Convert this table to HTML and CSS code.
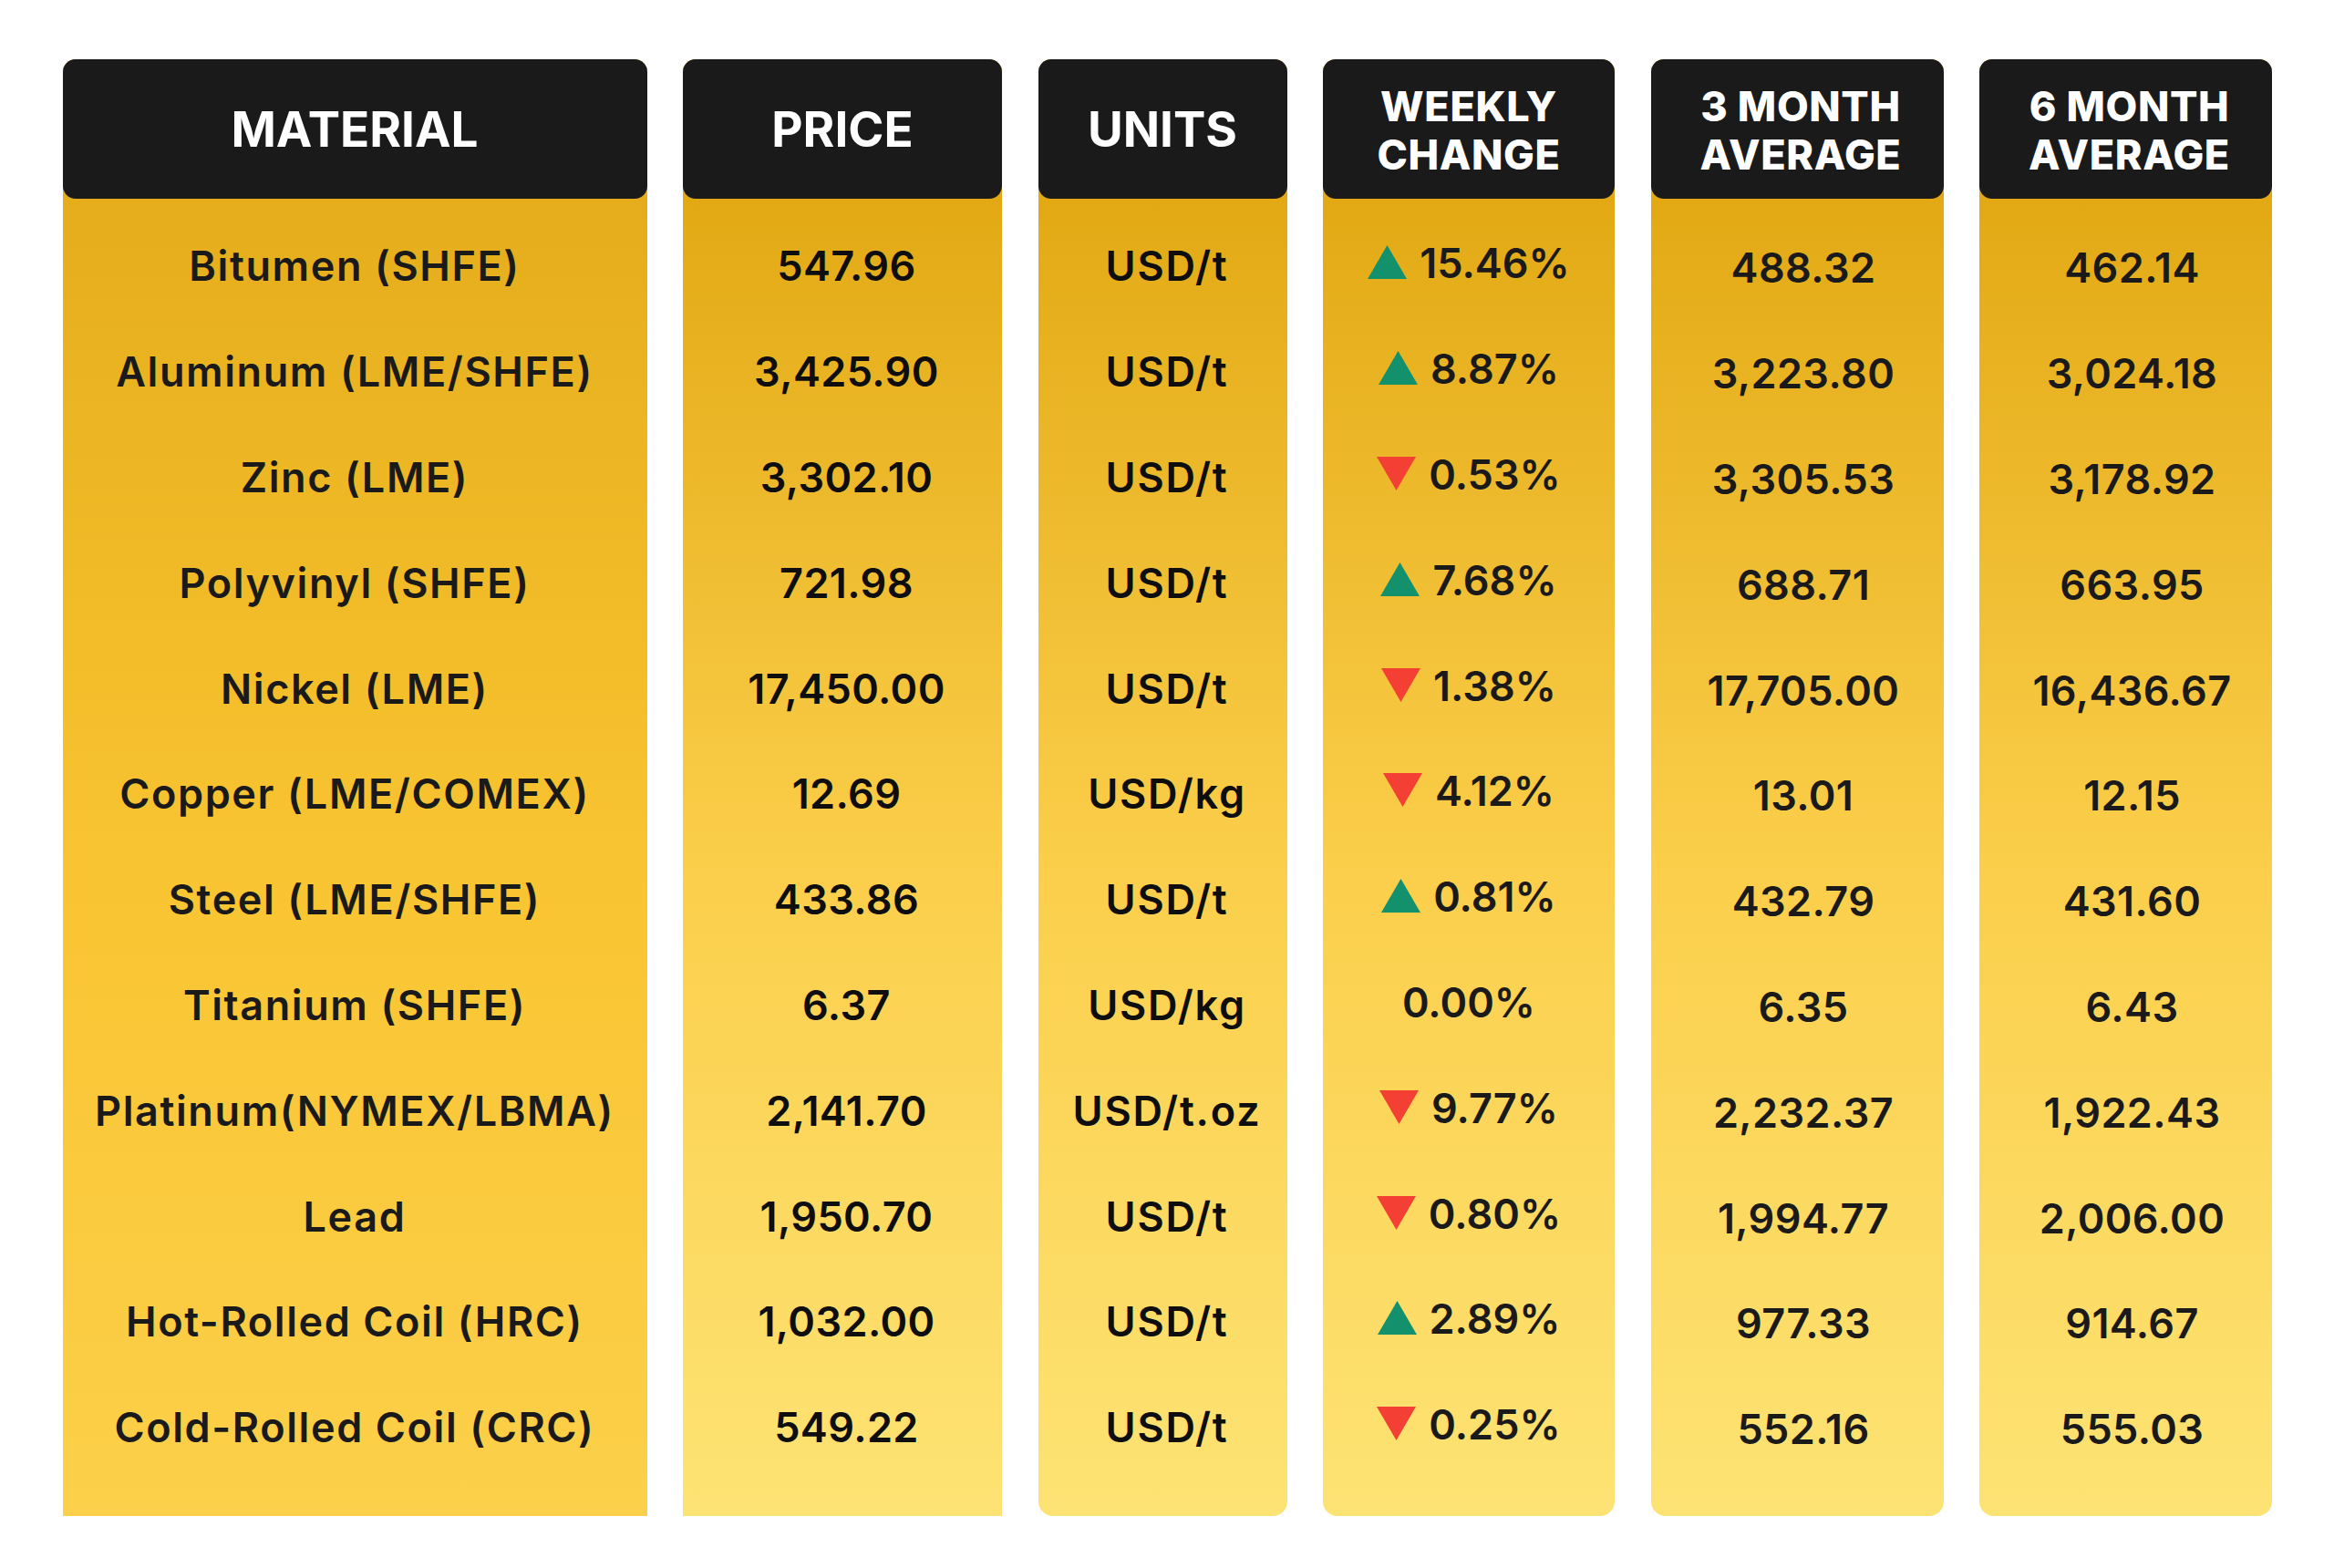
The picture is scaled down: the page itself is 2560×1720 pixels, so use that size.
FILE: index.html
```html
<!DOCTYPE html>
<html lang="en">
<head>
<meta charset="utf-8">
<title>Material Prices</title>
<link rel="stylesheet" href="styles.css">
</head>
<body>
<main class="board">
  <section class="col col-material">
    <div class="head">MATERIAL</div>
    <div class="body">
      <div class="cell">Bitumen (SHFE)</div>
      <div class="cell">Aluminum (LME/SHFE)</div>
      <div class="cell">Zinc (LME)</div>
      <div class="cell">Polyvinyl (SHFE)</div>
      <div class="cell">Nickel (LME)</div>
      <div class="cell">Copper (LME/COMEX)</div>
      <div class="cell">Steel (LME/SHFE)</div>
      <div class="cell">Titanium (SHFE)</div>
      <div class="cell">Platinum(NYMEX/LBMA)</div>
      <div class="cell">Lead</div>
      <div class="cell">Hot-Rolled Coil (HRC)</div>
      <div class="cell">Cold-Rolled Coil (CRC)</div>
    </div>
  </section>

  <section class="col col-price">
    <div class="head">PRICE</div>
    <div class="body">
      <div class="cell">547.96</div>
      <div class="cell">3,425.90</div>
      <div class="cell">3,302.10</div>
      <div class="cell">721.98</div>
      <div class="cell">17,450.00</div>
      <div class="cell">12.69</div>
      <div class="cell">433.86</div>
      <div class="cell">6.37</div>
      <div class="cell">2,141.70</div>
      <div class="cell">1,950.70</div>
      <div class="cell">1,032.00</div>
      <div class="cell">549.22</div>
    </div>
  </section>

  <section class="col col-units rounded">
    <div class="head">UNITS</div>
    <div class="body">
      <div class="cell">USD/t</div>
      <div class="cell">USD/t</div>
      <div class="cell">USD/t</div>
      <div class="cell">USD/t</div>
      <div class="cell">USD/t</div>
      <div class="cell">USD/kg</div>
      <div class="cell">USD/t</div>
      <div class="cell">USD/kg</div>
      <div class="cell">USD/t.oz</div>
      <div class="cell">USD/t</div>
      <div class="cell">USD/t</div>
      <div class="cell">USD/t</div>
    </div>
  </section>

  <section class="col col-weekly rounded">
    <div class="head two">WEEKLY<br>CHANGE</div>
    <div class="body">
      <div class="cell"><svg class="tri up" viewBox="0 0 43 37"><path d="M21.5 0L43 37H0Z"/></svg><span>15.46%</span></div>
      <div class="cell"><svg class="tri up" viewBox="0 0 43 37"><path d="M21.5 0L43 37H0Z"/></svg><span>8.87%</span></div>
      <div class="cell"><svg class="tri down" viewBox="0 0 43 37"><path d="M0 0H43L21.5 37Z"/></svg><span>0.53%</span></div>
      <div class="cell"><svg class="tri up" viewBox="0 0 43 37"><path d="M21.5 0L43 37H0Z"/></svg><span>7.68%</span></div>
      <div class="cell"><svg class="tri down" viewBox="0 0 43 37"><path d="M0 0H43L21.5 37Z"/></svg><span>1.38%</span></div>
      <div class="cell"><svg class="tri down" viewBox="0 0 43 37"><path d="M0 0H43L21.5 37Z"/></svg><span>4.12%</span></div>
      <div class="cell"><svg class="tri up" viewBox="0 0 43 37"><path d="M21.5 0L43 37H0Z"/></svg><span>0.81%</span></div>
      <div class="cell"><span>0.00%</span></div>
      <div class="cell"><svg class="tri down" viewBox="0 0 43 37"><path d="M0 0H43L21.5 37Z"/></svg><span>9.77%</span></div>
      <div class="cell"><svg class="tri down" viewBox="0 0 43 37"><path d="M0 0H43L21.5 37Z"/></svg><span>0.80%</span></div>
      <div class="cell"><svg class="tri up" viewBox="0 0 43 37"><path d="M21.5 0L43 37H0Z"/></svg><span>2.89%</span></div>
      <div class="cell"><svg class="tri down" viewBox="0 0 43 37"><path d="M0 0H43L21.5 37Z"/></svg><span>0.25%</span></div>
    </div>
  </section>

  <section class="col col-avg rounded">
    <div class="head two">3 MONTH<br>AVERAGE</div>
    <div class="body">
      <div class="cell">488.32</div>
      <div class="cell">3,223.80</div>
      <div class="cell">3,305.53</div>
      <div class="cell">688.71</div>
      <div class="cell">17,705.00</div>
      <div class="cell">13.01</div>
      <div class="cell">432.79</div>
      <div class="cell">6.35</div>
      <div class="cell">2,232.37</div>
      <div class="cell">1,994.77</div>
      <div class="cell">977.33</div>
      <div class="cell">552.16</div>
    </div>
  </section>

  <section class="col col-avg rounded">
    <div class="head two">6 MONTH<br>AVERAGE</div>
    <div class="body">
      <div class="cell">462.14</div>
      <div class="cell">3,024.18</div>
      <div class="cell">3,178.92</div>
      <div class="cell">663.95</div>
      <div class="cell">16,436.67</div>
      <div class="cell">12.15</div>
      <div class="cell">431.60</div>
      <div class="cell">6.43</div>
      <div class="cell">1,922.43</div>
      <div class="cell">2,006.00</div>
      <div class="cell">914.67</div>
      <div class="cell">555.03</div>
    </div>
  </section>
</main>
</body>
</html>
```

FILE: styles.css
```css
html, body {
  margin: 0;
  padding: 0;
  background: #ffffff;
}

body {
  font-family: Inter, "Noto Sans", "Liberation Sans", sans-serif;
  color: #1a1a1a;
}

.board {
  display: flex;
  gap: 39.5px;
  padding: 65px 0 0 68.5px;
}

.col {
  display: flex;
  flex-direction: column;
  height: 1598px;
  border-radius: 14px 14px 0 0;
  background: linear-gradient(180deg, #e2a914 0px, #e2a914 153px, #fbce4a 55%, #fde374 100%);
}

.col.rounded {
  border-radius: 14px 14px 16px 16px;
}

.col-material {
  width: 641px;
  background: linear-gradient(180deg, #e5ad1b 0px, #e5ad1b 153px, #f9c431 55%, #fcd04a 100%);
}

.col-price { width: 350px; }
.col-units { width: 273px; }
.col-weekly { width: 320px; }
.col-avg { width: 321px; }

.head {
  height: 153px;
  flex: none;
  background: #1a1a1a;
  border-radius: 14px;
  color: #ffffff;
  display: flex;
  align-items: center;
  justify-content: center;
  text-align: center;
  font-weight: 700;
  font-size: 53px;
  line-height: 1;
  padding-top: 2px;
  box-sizing: border-box;
}

.head.two {
  font-weight: 800;
  font-size: 45px;
  line-height: 53px;
  letter-spacing: 0.6px;
  padding-top: 3px;
}

.col-avg .head.two {
  padding-left: 8px;
}

.body {
  flex: 1;
  display: flex;
  flex-direction: column;
  padding-top: 16px;
}

.col-weekly .body { padding-top: 13px; }
.col-avg .body { padding-top: 18px; padding-left: 14px; }
.col-price .body { padding-left: 9px; }
.col-units .body { padding-left: 10px; }

.cell {
  height: 115.8px;
  flex: none;
  display: flex;
  align-items: center;
  justify-content: center;
  gap: 14px;
  font-weight: 600;
  font-size: 45px;
  line-height: 1;
  white-space: nowrap;
}

.col-material .cell {
  letter-spacing: 1.6px;
}

.col-units .cell {
  letter-spacing: 1.8px;
}

.col-price .cell,
.col-avg .cell {
  letter-spacing: 0.4px;
}

.col-price .cell,
.col-units .cell {
  color: #0e0e0e;
}

.tri {
  width: 43px;
  height: 37px;
  flex: none;
  margin-top: -2px;
}

.tri.up { fill: #13906c; }
.tri.down { fill: #f43f34; }
```
